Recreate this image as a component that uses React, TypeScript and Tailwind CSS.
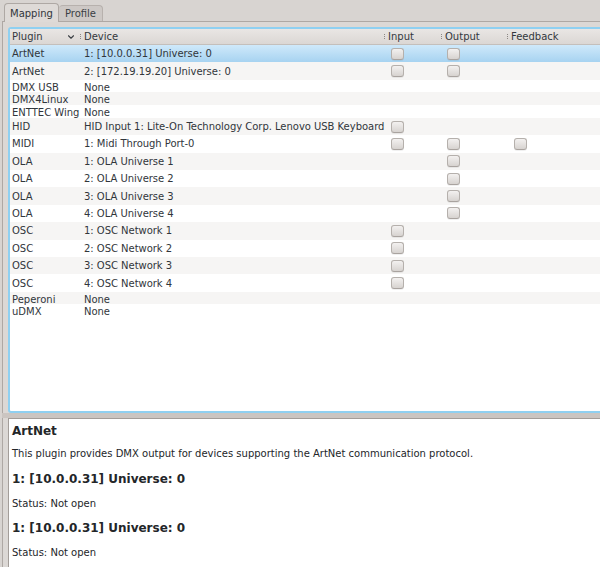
import React from "react";
import { ChevronDown } from "lucide-react";

type Row = {
  plugin: string;
  device: string;
  input?: boolean;
  output?: boolean;
  feedback?: boolean;
};

const rows: Row[] = [
  { plugin: "ArtNet", device: "1: [10.0.0.31] Universe: 0", input: true, output: true },
  { plugin: "ArtNet", device: "2: [172.19.19.20] Universe: 0", input: true, output: true },
  { plugin: "DMX USB", device: "None" },
  { plugin: "DMX4Linux", device: "None" },
  { plugin: "ENTTEC Wing", device: "None" },
  { plugin: "HID", device: "HID Input 1: Lite-On Technology Corp. Lenovo USB Keyboard", input: true },
  { plugin: "MIDI", device: "1: Midi Through Port-0", input: true, output: true, feedback: true },
  { plugin: "OLA", device: "1: OLA Universe 1", output: true },
  { plugin: "OLA", device: "2: OLA Universe 2", output: true },
  { plugin: "OLA", device: "3: OLA Universe 3", output: true },
  { plugin: "OLA", device: "4: OLA Universe 4", output: true },
  { plugin: "OSC", device: "1: OSC Network 1", input: true },
  { plugin: "OSC", device: "2: OSC Network 2", input: true },
  { plugin: "OSC", device: "3: OSC Network 3", input: true },
  { plugin: "OSC", device: "4: OSC Network 4", input: true },
  { plugin: "Peperoni", device: "None" },
  { plugin: "uDMX", device: "None" },
];

const Box = () => (
  <span className="block w-[13px] h-[12px] rounded-[3px] border border-[#b5b0ac] border-b-[#a9a39f] bg-linear-to-b from-[#f3f1f0] to-[#d7d3d0] shadow-[0_1px_0_rgba(0,0,0,0.06)]" />
);

const Sep = () => (
  <span className="flex flex-col gap-px mr-[3px]">
    <span className="w-px h-px bg-[#8c8884]" />
    <span className="w-px h-px bg-[#8c8884]" />
    <span className="w-px h-px bg-[#8c8884]" />
  </span>
);

const COLS = "grid grid-cols-[70px_304px_57px_66px_1fr]";

export default function App() {
  return (
    <div className="w-[600px] h-[567px] overflow-hidden bg-[#d8d4d1] flex flex-col font-['DejaVu_Sans',sans-serif] text-[10px] text-[#31363b]">
      {/* tabs */}
      <div className="flex items-end h-[21px] pl-[4px] shrink-0">
        <div className="h-[19px] px-[5px] flex items-center border border-b-0 border-[#aea8a4] rounded-t-[4px] bg-[#dedad7] relative z-10 -mb-px">
          Mapping
        </div>
        <div className="h-[16px] px-[6px] flex items-center border border-b-0 border-l-0 border-[#b7b1ad] rounded-t-[4px] bg-[#cdc8c5] text-[#3a3f44]">
          Profile
        </div>
      </div>

      {/* pane */}
      <div className="flex-1 flex flex-col ml-[2px] border-l border-t border-[#aea8a4] bg-[#dcd8d5] pl-[5px] pt-[5px] min-h-0">
        <div className="h-[386px] shrink-0 -mr-[20px] border-2 border-[#8fd0f1] rounded-l-[3px] bg-white overflow-hidden">
          <div className={`${COLS} h-[16px] items-center bg-linear-to-b from-[#e9e6e4] to-[#dbd7d4] border-b border-[#c4bfbb] text-[#33383d]`}>
            <div className="flex items-center pl-[2px]">
              <span className="flex-1">Plugin</span>
              <ChevronDown size={10} strokeWidth={2.6} className="mr-[4px] text-[#3a3f44]" />
            </div>
            <div className="flex items-center">
              <Sep />
              Device
            </div>
            <div className="flex items-center">
              <Sep />
              Input
            </div>
            <div className="flex items-center">
              <Sep />
              Output
            </div>
            <div className="flex items-center">
              <Sep />
              Feedback
            </div>
          </div>

          {rows.map((r, i) => {
            const tall = r.input || r.output || r.feedback;
            const bg =
              i === 0
                ? "bg-linear-to-b from-[#cfe9fa] to-[#a7d3f1]"
                : i % 2 === 1
                ? "bg-[#f6f5f4]"
                : "bg-white";
            return (
              <div
                key={i}
                className={`${COLS} items-center ${tall ? "h-[17.4px]" : "h-[12.7px]"} ${bg} whitespace-nowrap`}
              >
                <div className="pl-[2px]">{r.plugin}</div>
                <div className="pl-[4px] tracking-[-0.03px]">{r.device}</div>
                <div className="pl-[7px]">{r.input && <Box />}</div>
                <div className="pl-[6px]">{r.output && <Box />}</div>
                <div className="pl-[7px]">{r.feedback && <Box />}</div>
              </div>
            );
          })}
        </div>

        {/* splitter */}
        <div className="h-[5px] shrink-0 -ml-[6px] bg-[#cbc5c1]" />

        {/* info panel */}
        <div className="flex-1 -mr-[20px] border-l border-t border-[#a39d99] bg-white px-[3px] text-[#232629]">
          <div className="mt-[5px] h-[14px] leading-[14px] font-bold text-[12px]">ArtNet</div>
          <div className="mt-[10px] h-[12px] leading-[12px]">
            This plugin provides DMX output for devices supporting the ArtNet communication protocol.
          </div>
          <div className="mt-[12px] h-[14px] leading-[14px] font-bold text-[12px]">1: [10.0.0.31] Universe: 0</div>
          <div className="mt-[12px] h-[12px] leading-[12px]">Status: Not open</div>
          <div className="mt-[11px] h-[14px] leading-[14px] font-bold text-[12px]">1: [10.0.0.31] Universe: 0</div>
          <div className="mt-[12px] h-[12px] leading-[12px]">Status: Not open</div>
        </div>
      </div>
    </div>
  );
}
